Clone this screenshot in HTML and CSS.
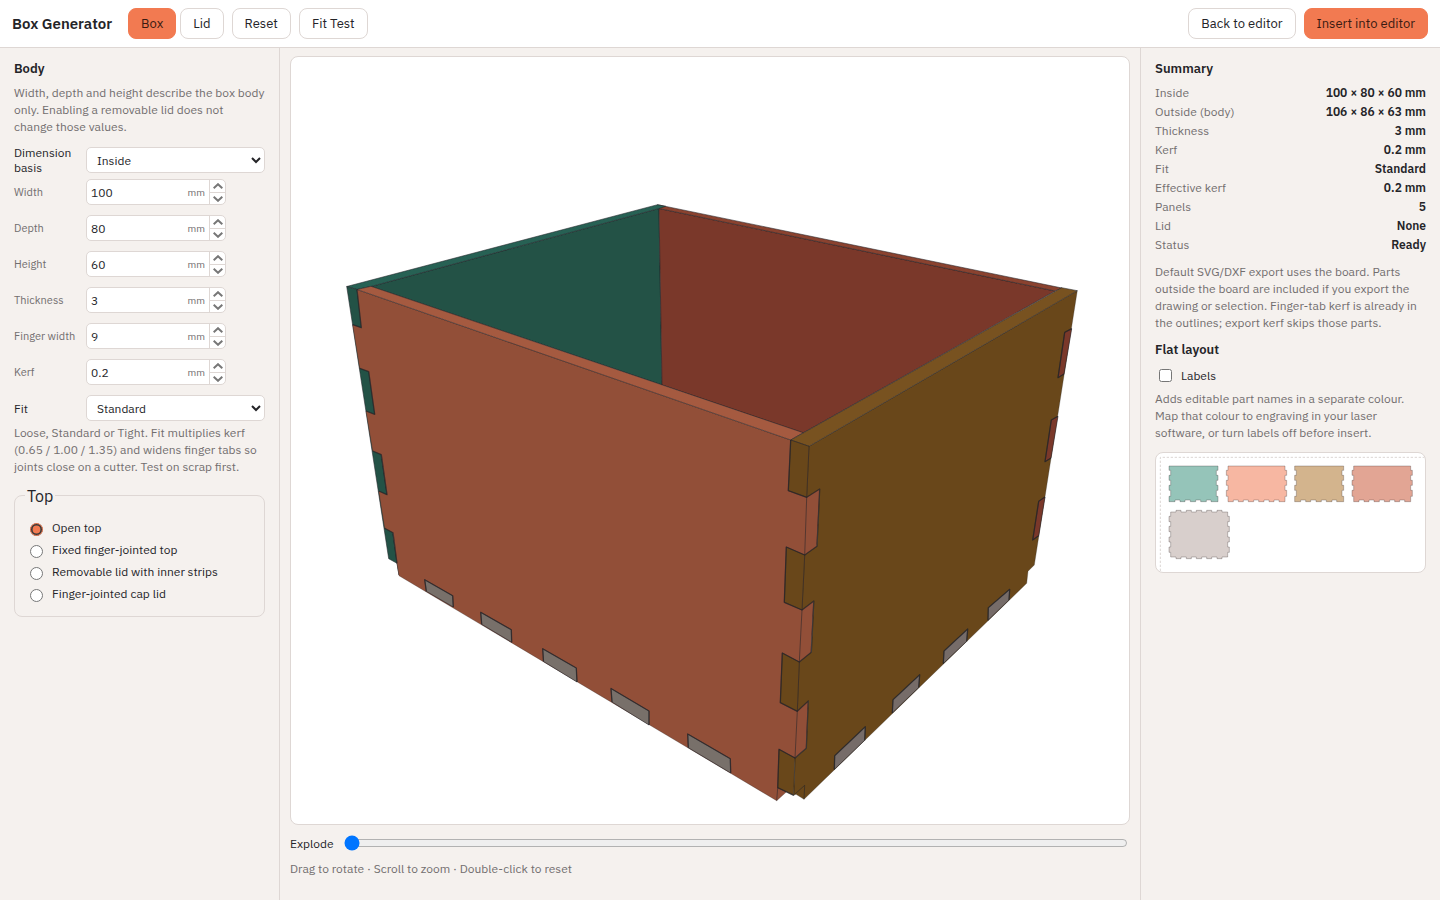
FILE: index.html
```
<!DOCTYPE html>
<html lang="en">
<head>
<meta charset="utf-8">
<meta name="viewport" content="width=device-width, initial-scale=1">
<title>Box Generator</title>
<link rel="stylesheet" href="styles.css">
</head>
<body>
<svg class="symbols" aria-hidden="true">
  <symbol id="up" viewBox="0 0 10 6"><path d="M.7 5.200L5 1.200L9.300 5.200"/></symbol>
  <symbol id="down" viewBox="0 0 10 6"><path d="M.7 .8L5 4.800L9.300 .8"/></symbol>
</svg>
<header class="topbar">
  <h1 class="title">Box Generator</h1>
  <nav class="tools" aria-label="Generator">
    <div class="tabs">
      <button class="btn btn-primary" type="button">Box</button>
      <button class="btn" type="button">Lid</button>
    </div>
    <button class="btn" type="button">Reset</button>
    <button class="btn" type="button">Fit Test</button>
  </nav>
  <div class="actions">
    <button class="btn" type="button">Back to editor</button>
    <button class="btn btn-primary" type="button">Insert into editor</button>
  </div>
</header>
<main class="workspace">
  <form class="panel panel-left">
    <h2 class="heading">Body</h2>
    <p class="hint">Width, depth and height describe the box body only. Enabling a removable lid does not change those values.</p>
    <div class="fields">
      <div class="field">
        <label class="label-strong" for="basis">Dimension basis</label>
        <select class="select" id="basis"><option>Inside</option><option>Outside</option></select>
      </div>
      <div class="field">
        <label class="label" for="width">Width</label>
        <div class="number"><input class="number-input" id="width" type="text" inputmode="decimal" value="100"><span class="unit">mm</span><div class="steps"><button class="step" type="button" aria-label="Increase width"><svg class="chev"><use href="#up"/></svg></button><button class="step" type="button" aria-label="Decrease width"><svg class="chev"><use href="#down"/></svg></button></div></div>
      </div>
      <div class="field">
        <label class="label" for="depth">Depth</label>
        <div class="number"><input class="number-input" id="depth" type="text" inputmode="decimal" value="80"><span class="unit">mm</span><div class="steps"><button class="step" type="button" aria-label="Increase depth"><svg class="chev"><use href="#up"/></svg></button><button class="step" type="button" aria-label="Decrease depth"><svg class="chev"><use href="#down"/></svg></button></div></div>
      </div>
      <div class="field">
        <label class="label" for="height">Height</label>
        <div class="number"><input class="number-input" id="height" type="text" inputmode="decimal" value="60"><span class="unit">mm</span><div class="steps"><button class="step" type="button" aria-label="Increase height"><svg class="chev"><use href="#up"/></svg></button><button class="step" type="button" aria-label="Decrease height"><svg class="chev"><use href="#down"/></svg></button></div></div>
      </div>
      <div class="field">
        <label class="label" for="thickness">Thickness</label>
        <div class="number"><input class="number-input" id="thickness" type="text" inputmode="decimal" value="3"><span class="unit">mm</span><div class="steps"><button class="step" type="button" aria-label="Increase thickness"><svg class="chev"><use href="#up"/></svg></button><button class="step" type="button" aria-label="Decrease thickness"><svg class="chev"><use href="#down"/></svg></button></div></div>
      </div>
      <div class="field">
        <label class="label" for="finger">Finger width</label>
        <div class="number"><input class="number-input" id="finger" type="text" inputmode="decimal" value="9"><span class="unit">mm</span><div class="steps"><button class="step" type="button" aria-label="Increase finger width"><svg class="chev"><use href="#up"/></svg></button><button class="step" type="button" aria-label="Decrease finger width"><svg class="chev"><use href="#down"/></svg></button></div></div>
      </div>
      <div class="field">
        <label class="label" for="kerf">Kerf</label>
        <div class="number"><input class="number-input" id="kerf" type="text" inputmode="decimal" value="0.2"><span class="unit">mm</span><div class="steps"><button class="step" type="button" aria-label="Increase kerf"><svg class="chev"><use href="#up"/></svg></button><button class="step" type="button" aria-label="Decrease kerf"><svg class="chev"><use href="#down"/></svg></button></div></div>
      </div>
      <div class="field">
        <label class="label-strong" for="fit">Fit</label>
        <select class="select" id="fit"><option>Standard</option><option>Loose</option><option>Tight</option></select>
      </div>
    </div>
    <p class="hint hint-fit">Loose, Standard or Tight. Fit multiplies kerf (0.65 / 1.00 / 1.35) and widens finger tabs so joints close on a cutter. Test on scrap first.</p>
    <fieldset class="group">
      <legend class="legend">Top</legend>
      <label class="option"><input class="radio" type="radio" name="top" checked>Open top</label>
      <label class="option"><input class="radio" type="radio" name="top">Fixed finger-jointed top</label>
      <label class="option"><input class="radio" type="radio" name="top">Removable lid with inner strips</label>
      <label class="option"><input class="radio" type="radio" name="top">Finger-jointed cap lid</label>
    </fieldset>
  </form>

  <section class="stage" aria-label="Preview">
    <div class="viewport">
      <svg class="scene" viewBox="291 57 838 767" role="img" aria-label="Assembled box">
        <g class="edges">
          <path class="green" d="M371 286.5L659 208.5L662 385Z"/>
          <path class="maroon" d="M659 208.5L1055 291L803 433L662 385Z"/>
          <path class="maroon-top" d="M657.500 204.700L1062 288L1055 291L659 208.500Z"/>
          <path class="green-top" d="M346.700 286.500L657.500 204.700L665.700 206.300L659 208.500L371 286.500L357 289.500Z"/>
          <path class="green" d="M346.700 286.500L357 289.500L399 575L397 563.300L388.700 558.700Z"/>
          <path class="orange silhouette" d="M357 289.500L791 440L809 446.300L820 489L808.300 701L806.300 748.300L795 758L786 792.300L776.700 800.700L399 575.700L397 563.300L393 532.700L384.700 528.300L378.700 491L387 494.700L381.300 454.700L372.700 451L366 411L374.700 414.300L368.700 371.700L359.700 368.300L352.700 324.700L361.300 327.700Z"/>
          <path class="orange-top" d="M357 289.500L371 286.300L803.300 432.700L790.700 440Z"/>
          <path class="slot-line" d="M357 289.500L361.300 327.700L352.700 324.700M359.700 368.300L368.700 371.700L374.700 414.300L366 411M372.700 451L381.300 454.700L387 494.700L378.700 491M384.700 528.300L393 532.700L397 563.300"/>
          <path class="brown silhouette" d="M809 446.300L1077.300 290.700L1034.300 565L1028 571.300L1026.700 583.300L804 799.300L796 794.300L793.700 795.300L795 758L806.300 748.300L808.300 701L797.300 711.300L799.300 662L811.300 652.300L813.800 601L802 610L804.700 555L817 546.300L819.700 489L806.700 497.300Z"/>
          <path class="brown-top" d="M790.700 440L1061.700 287.700L1077.300 290.700L809 446.300Z"/>
          <path class="brown" d="M790.700 440L809 446.300L806.700 497.300L788.300 490.700ZM786.300 547L804.700 555L802 610L784.300 602.300ZM782.300 653L799.300 662L797.300 711.300L780.300 702.700ZM779 749.300L795 758L793.700 795.300L777.700 787.700Z"/>
          <path class="line" d="M806.700 497.300L804.700 555M802 610L799.300 662M797.300 711.300L795 758M777.700 787.700L776.700 800.700M795 794L804.700 785.300L804 799.300"/>
          <path class="slot-line" d="M790.700 440L788.300 490.700L806.700 497.300L819.700 489L817 546.300L804.700 555L786.300 547L784.300 602.300L802 610L813.800 601L811.300 652.300L799.300 662L782.300 653L780.300 702.700L797.300 711.300L808.300 701L806.300 748.300L795 758L779 749.300L777.700 787.700L793.700 795.300"/>
          <path class="maroon" d="M1071.700 328.700L1064.700 332.300L1058 377.700L1064 374ZM1058 416.300L1051.300 420L1045 461.700L1051 458ZM1045 497L1038.700 501.300L1032.700 540L1038.700 535.700Z"/>
          <path class="slot-line" d="M1071.700 328.700L1064.700 332.300L1058 377.700L1064 374M1058 416.300L1051.300 420L1045 461.700L1051 458M1045 497L1038.700 501.300L1032.700 540L1038.700 535.700"/>
          <path class="gray" d="M424.700 579.700L452.700 595.700L453.300 607L426.300 591.300ZM480.700 612.300L511.300 629.700L511.700 642.300L481.700 624.300ZM542.700 648.700L576.300 668L577 682L543.500 661.500ZM611 688.500L649 711L649 725L612 702ZM687.700 734L730.300 758.700L730.700 773L688.300 747.700Z"/>
          <path class="slot-line" d="M426.300 591.300L424.700 579.700L452.700 595.700L453.300 607M481.700 624.300L480.700 612.300L511.300 629.700L511.700 642.300M543.500 661.500L542.700 648.700L576.300 668L577 682M612 702L611 688.500L649 711L649 725M688.300 747.700L687.700 734L730.300 758.700L730.700 773"/>
          <path class="gray-side" d="M1009.700 589.300L988.300 607.700L988 620.300L1009 600ZM967.700 629L944 651L943.300 663.600L966.700 641.300ZM919.700 674.700L893 699.700L892.300 713L918.700 687.500ZM865.300 726.700L834.700 755.700L834.300 769.500L864.700 740.300Z"/>
          <path class="slot-line" d="M1009 600L1009.700 589.300L988.300 607.700L988 620.300M966.700 641.300L967.700 629L944 651L943.300 663.600M918.700 687.500L919.700 674.700L893 699.700L892.300 713M864.700 740.300L865.300 726.700L834.700 755.700L834.300 769.500"/>
        </g>
      </svg>
    </div>
    <div class="explode">
      <label for="explode">Explode</label>
      <input class="slider" id="explode" type="range" min="0" max="100" value="0">
    </div>
    <p class="hint hint-stage">Drag to rotate · Scroll to zoom · Double-click to reset</p>
  </section>

  <aside class="panel panel-right">
    <h2 class="heading">Summary</h2>
    <dl class="summary">
      <dt>Inside</dt><dd>100 × 80 × 60 mm</dd>
      <dt>Outside (body)</dt><dd>106 × 86 × 63 mm</dd>
      <dt>Thickness</dt><dd>3 mm</dd>
      <dt>Kerf</dt><dd>0.2 mm</dd>
      <dt>Fit</dt><dd>Standard</dd>
      <dt>Effective kerf</dt><dd>0.2 mm</dd>
      <dt>Panels</dt><dd>5</dd>
      <dt>Lid</dt><dd>None</dd>
      <dt>Status</dt><dd>Ready</dd>
    </dl>
    <p class="hint hint-export">Default SVG/DXF export uses the board. Parts outside the board are included if you export the drawing or selection. Finger-tab kerf is already in the outlines; export kerf skips those parts.</p>
    <h2 class="heading">Flat layout</h2>
    <label class="check"><input class="checkbox" type="checkbox">Labels</label>
    <p class="hint hint-labels">Adds editable part names in a separate colour. Map that colour to engraving in your laser software, or turn labels off before insert.</p>
    <div class="sheet">
      <svg class="flat" viewBox="48 39 807 357" role="img" aria-label="Flat layout">
        <path class="board" d="M855 52H61V396"/>
        <defs>
          <path id="side" d="M87 78H234V91H229V106H234V121H229V136H234V151H229V169H234V185H213V180H199V185H182V180H167V185H151V180H135V185H120V180H105V185H87V169H92V151H87V136H92V121H87V106H92V91H87Z"/>
          <path id="end" d="M264 78H435V91H440V106H435V121H440V136H435V151H440V169H435V185H417V180H402V185H387V180H372V185H356V180H341V185H325V180H310V185H295V180H280V185H264V169H259V151H264V136H259V121H264V106H259V91H264Z"/>
        </defs>
        <use class="part part-green" href="#side"/>
        <use class="part part-orange" href="#end"/>
        <use class="part part-tan" href="#side" x="377"/>
        <use class="part part-red" href="#end" x="377"/>
        <path class="part part-gray" d="M92 216H108V211H123V216H139V211H154V216H169V211H185V216H200V211H215V216H231V211H246V216H263V229H268V245H263V259H268V275H263V291H268V306H263V321H268V337H263V351H246V356H231V351H215V356H200V351H185V356H169V351H154V356H139V351H123V356H108V351H92V337H87V321H92V306H87V291H92V275H87V259H92V245H87V229H92Z"/>
      </svg>
    </div>
  </aside>
</main>
</body>
</html>
```
FILE: styles.css
```
* { box-sizing: border-box; }

:root {
  --ink: #242428;
  --muted: #726e6f;
  --line: #ded7d4;
  --panel: #f5f1ee;
  --accent: #f27a51;
}

body {
  margin: 0;
  min-height: 100vh;
  display: flex;
  flex-direction: column;
  background: var(--panel);
  color: var(--ink);
  font: 12px/15px "IBM Plex Sans", "Noto Sans", sans-serif;
}

h1, h2, p, dl, dd { margin: 0; }
button, input, select { font: inherit; color: inherit; }
.symbols { display: none; }

.topbar {
  display: flex;
  align-items: center;
  padding: 8px 12px;
  background: #fff;
  border-bottom: 1px solid var(--line);
}
.title { font-size: 15px; line-height: 20px; font-weight: 600; margin-right: 16px; }
.tools, .actions { display: flex; gap: 8px; }
.tabs { display: flex; gap: 4px; }
.actions { margin-left: auto; }

.btn {
  height: 31px;
  padding: 0 12px;
  border: 1px solid var(--line);
  border-radius: 8px;
  background: #fff;
  font-size: 13px;
  line-height: 17px;
  white-space: nowrap;
}
.btn-primary { background: var(--accent); border-color: var(--accent); color: #3a1a12; }

.workspace {
  flex: 1;
  display: grid;
  grid-template-columns: 280px minmax(0, 1fr) 300px;
}
.panel { padding: 12px 14px; }
.panel-left { border-right: 1px solid var(--line); }
.panel-right { border-left: 1px solid var(--line); }
.heading { font-size: 13px; line-height: 17px; font-weight: 600; margin-bottom: 7px; }
.hint { color: var(--muted); line-height: 17px; }

.fields { display: flex; flex-direction: column; gap: 10px; margin-top: 12px; }
.field {
  display: grid;
  grid-template-columns: 64px minmax(0, 1fr);
  grid-template-rows: 26px;
  column-gap: 8px;
  align-items: center;
}
.field:first-child { margin-bottom: -4px; }
.label { color: var(--muted); font-size: 11px; white-space: nowrap; }
.select {
  width: 100%;
  height: 26px;
  padding: 0 0 0 6px;
  border: 1px solid var(--line);
  border-radius: 5px;
  background: #fff;
}
.number {
  display: flex;
  align-items: stretch;
  width: 140px;
  height: 26px;
  border: 1px solid var(--line);
  border-radius: 5px;
  background: #fff;
  overflow: hidden;
}
.number-input { flex: 1; min-width: 0; border: 0; padding: 1px 4px 0; background: none; }
.unit { color: var(--muted); font-size: 10px; line-height: 25px; padding-right: 4px; }
.steps { display: flex; flex-direction: column; width: 16px; border-left: 1px solid var(--line); }
.step { flex: 1; display: flex; align-items: center; justify-content: center; border: 0; padding: 1px 0 0; background: none; }
.step + .step { border-top: 1px solid var(--line); }
.chev { width: 10px; height: 6px; fill: none; stroke: #777; stroke-width: 2; overflow: visible; }

.hint-fit { margin-top: 3px; }
.group { margin: 11px 0 0; padding: 12px; border: 1px solid var(--line); border-radius: 8px; min-width: 0; }
.legend { font-size: 16px; line-height: 16px; padding: 2px 2px 0; margin-left: -2px; }
.option { display: flex; align-items: center; height: 22px; gap: 9px; }
.radio { width: 13px; height: 13px; margin: 5px 0 0 3px; accent-color: var(--accent); }

.stage { display: flex; flex-direction: column; padding: 8px 10px 23px; min-width: 0; }
.viewport { flex: 1; display: flex; min-height: 0; border: 1px solid var(--line); border-radius: 8px; background: #fff; }
.scene { display: block; width: 100%; height: auto; }
.explode { display: flex; align-items: center; gap: 8px; height: 20px; margin-top: 8px; }
.slider { flex: 1; min-width: 0; }
.hint-stage { margin-top: 7px; }

.edges path { stroke: rgba(35, 35, 40, .55); stroke-width: 1; stroke-linejoin: round; }
.edges .silhouette { stroke-opacity: .5; }
.edges .line { fill: none; }
.edges .slot-line { fill: none; stroke: rgba(35, 35, 40, .65); stroke-width: 1.3; }
.green { fill: #235246; }
.green-top { fill: #276154; }
.maroon { fill: #7a382a; }
.maroon-top { fill: #8a422f; }
.orange { fill: #924f38; }
.orange-top { fill: #a55a40; }
.brown { fill: #69471a; }
.brown-top { fill: #785220; }
.gray { fill: #78706a; }
.gray-side { fill: #766c69; }

.summary { display: grid; grid-template-columns: auto auto; line-height: 19px; margin-top: -1px; }
.summary dt { color: var(--muted); }
.summary dd { text-align: right; font-weight: 600; }
.hint-export { margin: 9px 0 10px; }
.check { display: flex; align-items: center; gap: 9px; height: 20px; }
.checkbox { width: 13px; height: 13px; margin: 0 0 0 4px; }
.hint-labels { margin: 5px 0 11px; }
.sheet { border: 1px solid var(--line); border-radius: 8px; background: #fff; overflow: hidden; }
.flat { display: block; width: 100%; height: auto; }
.board { fill: none; stroke: #dcd6d4; stroke-width: 3; stroke-dasharray: 7 5; }
.part { stroke: rgba(60, 50, 50, .3); stroke-width: 3; }
.part-green { fill: #95c4b9; }
.part-orange { fill: #f7b7a2; }
.part-tan { fill: #d3b48d; }
.part-red { fill: #e2a594; }
.part-gray { fill: #d8cfcc; }
```
